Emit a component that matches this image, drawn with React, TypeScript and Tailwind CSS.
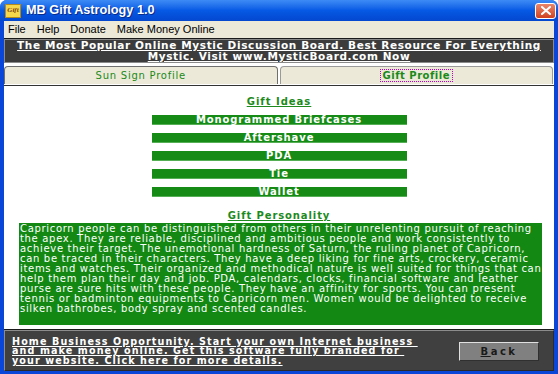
const bodyLines = [
  "Capricorn people can be distinguished from others in their unrelenting pursuit of reaching",
  "the apex. They are reliable, disciplined and ambitious people and work consistently to",
  "achieve their target. The unemotional hardness of Saturn, the ruling planet of Capricorn,",
  "can be traced in their characters. They have a deep liking for fine arts, crockery, ceramic",
  "items and watches. Their organized and methodical nature is well suited for things that can",
  "help them plan their day and job. PDA, calendars, clocks, financial software and leather",
  "purse are sure hits with these people. They have an affinity for sports. You can present",
  "tennis or badminton equipments to Capricorn men. Women would be delighted to receive",
  "silken bathrobes, body spray and scented candles.",
];

const gifts = ["Monogrammed Briefcases", "Aftershave", "PDA", "Tie", "Wallet"];

const promoLines = [
  "Home Business Opportunity. Start your own Internet business\u00a0",
  "and make money online. Get this software fully branded for\u00a0",
  "your website. Click here for more details.",
];

const TitleBar = () => {
  return (
    <div className="h-[21px] flex items-center px-[5px] bg-gradient-to-b from-[#3d8bf5] via-[#0659e4] to-[#0447cf]">
      <div className="w-[16px] h-[14px] bg-[#f6d64a] border border-[#b08a20] flex items-center justify-center text-[7px] leading-none italic font-bold text-[#7a3d10] font-['Liberation_Serif',serif]">
        Gift
      </div>
      <span className="ml-[5px] text-white font-bold text-[12.7px] font-['Liberation_Sans',sans-serif] [text-shadow:1px_1px_0_#0a2a8a]">
        MB Gift Astrology 1.0
      </span>
      <div className="ml-auto mr-[-3px] w-[21px] h-[16px] rounded-[3px] border border-white bg-gradient-to-b from-[#e9856a] to-[#d0401c] flex items-center justify-center">
        <svg width="10" height="9" viewBox="0 0 10 9">
          <path d="M1 1 L9 8 M9 1 L1 8" stroke="white" strokeWidth="2" strokeLinecap="square" />
        </svg>
      </div>
    </div>
  );
};

const MenuBar = () => {
  return (
    <div className="h-[17px] flex items-center gap-[11px] px-[4px] bg-[#ece9d8] text-[11px] text-black font-['Liberation_Sans',sans-serif]">
      <span>File</span>
      <span>Help</span>
      <span>Donate</span>
      <span>Make Money Online</span>
    </div>
  );
};

export default function App() {
  return (
    <div className="w-[558px] h-[374px] bg-[#0a46d8] flex flex-col rounded-t-[7px] overflow-hidden font-['DejaVu_Sans',Verdana,sans-serif]">
      <TitleBar />
      <div className="flex-1 flex flex-col mx-[4px] mb-[3px] bg-[#ece9d8]">
        <MenuBar />
        <div className="flex-1 flex flex-col bg-white border-t border-[#1a1a1a]">
          <div className="h-[24px] bg-[#3c3c3c] border border-[#8a8a8a] flex flex-col items-center justify-center text-white font-bold text-[10.5px] leading-[11px] tracking-[0.62px] underline whitespace-nowrap">
            <span>The Most Popular Online Mystic Discussion Board. Best Resource For Everything</span>
            <span>Mystic. Visit www.MysticBoard.com Now</span>
          </div>
          <div className="h-[3px]" />
          <div className="h-[18px] flex">
            <div className="flex-1 bg-[#ece9d8] border border-b-0 border-[#6f6f6f] rounded-t-[4px] flex items-center justify-center text-[10px] tracking-[0.75px] text-[#1a8a1a]">
              Sun Sign Profile
            </div>
            <div className="flex-1 bg-[#ece9d8] border border-b-0 border-[#9a9a9a] rounded-t-[4px] ml-[2px] mr-[1px] flex items-center justify-center">
              <span className="px-[2px] border border-dotted border-[#c000c0] text-[10px] leading-[11px] font-bold tracking-[0.5px] text-[#1a8a1a]">
                Gift Profile
              </span>
            </div>
          </div>
          <div className="h-px bg-white" />
          <div className="h-px bg-[#333]" />
          <div className="flex-1 flex flex-col items-center">
            <div className="mt-[10px] h-[12px] leading-[12px] text-[10px] font-bold tracking-[1px] text-[#1d8a1d] underline">
              Gift Ideas
            </div>
            <div className="mt-[7px] flex flex-col gap-[8px]">
              {gifts.map((g) => (
                <div
                  key={g}
                  className="w-[255px] h-[10px] bg-[#168c16] border-b border-[#55b055] flex items-center justify-center text-white font-bold text-[10px] leading-none tracking-[0.9px]"
                >
                  {g}
                </div>
              ))}
            </div>
            <div className="mt-[13px] h-[12px] leading-[12px] text-[10px] font-bold tracking-[0.9px] text-[#1d8a1d] underline">
              Gift Personality
            </div>
            <div className="mt-[1px] self-start ml-[15px] w-[523px] h-[102px] bg-[#138913] px-[1px] pt-[1px] text-white text-[10px] leading-[10px] tracking-[0.68px]">
              {bodyLines.map((l) => (
                <div key={l} className="whitespace-nowrap">
                  {l}
                </div>
              ))}
            </div>
          </div>
          <div className="h-px bg-[#1a1a1a]" />
          <div className="h-[41px] bg-[#404040] border-t border-l border-[#8c8c8c] border-r border-b border-r-[#2a2a2a] border-b-[#2a2a2a] flex items-center pl-[7px] pr-[14px]">
            <div className="flex flex-col text-white font-bold text-[9.6px] leading-[9.6px] tracking-[1.1px] underline mt-[1px]">
              {promoLines.map((l) => (
                <span key={l} className="whitespace-pre">
                  {l}
                </span>
              ))}
            </div>
            <button
              type="button"
              className="ml-auto mt-[2px] w-[80px] h-[19px] bg-[#808080] border border-t-[#e0e0e0] border-l-[#e0e0e0] border-r-[#303030] border-b-[#303030] text-[10px] font-bold text-[#1a1a1a] tracking-[2.5px]"
            >
              <span className="underline">B</span>ack
            </button>
          </div>
        </div>
      </div>
    </div>
  );
}
